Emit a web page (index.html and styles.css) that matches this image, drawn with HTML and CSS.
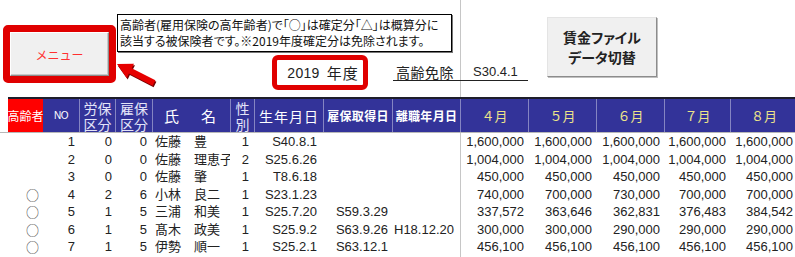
FILE: index.html
```html
<!DOCTYPE html>
<html lang="ja">
<head>
<meta charset="utf-8">
<link rel="stylesheet" href="styles.css">
</head>
<body>
<div class="sheet">
  <div class="top">
    <div class="menu-frame"><button class="menu-btn">メニュー</button></div>
    <div class="mid">
      <div class="note">高齢者(雇用保険の高年齢者)で「○」は確定分「△」は概算分に<br>該当する被保険者です。※2019年度確定分は免除されます。</div>
      <div class="mid-row">
        <svg class="arrow" width="44" height="31" viewBox="0 0 44 31">
          <polygon points="3,9 20,8.3 17.7,12.7 41.4,24.8 38.6,30.2 14.9,18.1 12.7,22.5" fill="#7a0000"/>
          <polygon points="2,7 19,6.8 16.7,11.2 40.4,23.3 37.6,28.7 13.9,16.6 11.7,21" fill="#e60000"/>
        </svg>
        <div class="year-box"><span class="yr-num">2019</span><span class="yr-label">年度</span></div>
        <div class="exempt"><span class="ex-label">高齢免除</span><span class="ex-date">S30.4.1</span></div>
      </div>
    </div>
    <button class="wage-btn">賃金ファイル<br>データ切替</button>
  </div>

  <div class="hdr">
    <div class="hc h-old">高齢者</div>
    <div class="hc h-no">NO</div>
    <div class="hc h-two"><span>労保</span><span>区分</span></div>
    <div class="hc h-two"><span>雇保</span><span>区分</span></div>
    <div class="hc h-name"><span>氏</span><span>名</span></div>
    <div class="hc h-two"><span>性</span><span>別</span></div>
    <div class="hc h-birth">生年月日</div>
    <div class="hc h-small">雇保取得日</div>
    <div class="hc h-small">離職年月日</div>
    <div class="hc h-month">４月</div>
    <div class="hc h-month">５月</div>
    <div class="hc h-month">６月</div>
    <div class="hc h-month">７月</div>
    <div class="hc h-month">８月</div>
  </div>

  <div class="rows">
    <div class="row">
      <div class="c c-old"></div><div class="c c-no">1</div><div class="c c-k1">0</div><div class="c c-k2">0</div><div class="c c-name">佐藤　豊</div><div class="c c-sex">1</div><div class="c c-birth">S40.8.1</div><div class="c c-get"></div><div class="c c-left"></div><div class="c c-m">1,600,000</div><div class="c c-m">1,600,000</div><div class="c c-m">1,600,000</div><div class="c c-m">1,600,000</div><div class="c c-m">1,600,000</div>
    </div>
    <div class="row">
      <div class="c c-old"></div><div class="c c-no">2</div><div class="c c-k1">0</div><div class="c c-k2">0</div><div class="c c-name">佐藤　理恵子</div><div class="c c-sex">2</div><div class="c c-birth">S25.6.26</div><div class="c c-get"></div><div class="c c-left"></div><div class="c c-m">1,004,000</div><div class="c c-m">1,004,000</div><div class="c c-m">1,004,000</div><div class="c c-m">1,004,000</div><div class="c c-m">1,004,000</div>
    </div>
    <div class="row">
      <div class="c c-old"></div><div class="c c-no">3</div><div class="c c-k1">0</div><div class="c c-k2">0</div><div class="c c-name">佐藤　肇</div><div class="c c-sex">1</div><div class="c c-birth">T8.6.18</div><div class="c c-get"></div><div class="c c-left"></div><div class="c c-m">450,000</div><div class="c c-m">450,000</div><div class="c c-m">450,000</div><div class="c c-m">450,000</div><div class="c c-m">450,000</div>
    </div>
    <div class="row">
      <div class="c c-old">○</div><div class="c c-no">4</div><div class="c c-k1">2</div><div class="c c-k2">6</div><div class="c c-name">小林　良二</div><div class="c c-sex">1</div><div class="c c-birth">S23.1.23</div><div class="c c-get"></div><div class="c c-left"></div><div class="c c-m">740,000</div><div class="c c-m">700,000</div><div class="c c-m">730,000</div><div class="c c-m">700,000</div><div class="c c-m">700,000</div>
    </div>
    <div class="row">
      <div class="c c-old">○</div><div class="c c-no">5</div><div class="c c-k1">1</div><div class="c c-k2">5</div><div class="c c-name">三浦　和美</div><div class="c c-sex">1</div><div class="c c-birth">S25.7.20</div><div class="c c-get">S59.3.29</div><div class="c c-left"></div><div class="c c-m">337,572</div><div class="c c-m">363,646</div><div class="c c-m">362,831</div><div class="c c-m">376,483</div><div class="c c-m">384,542</div>
    </div>
    <div class="row">
      <div class="c c-old">○</div><div class="c c-no">6</div><div class="c c-k1">1</div><div class="c c-k2">5</div><div class="c c-name">髙木　政美</div><div class="c c-sex">1</div><div class="c c-birth">S25.9.2</div><div class="c c-get">S63.9.26</div><div class="c c-left">H18.12.20</div><div class="c c-m">300,000</div><div class="c c-m">300,000</div><div class="c c-m">290,000</div><div class="c c-m">290,000</div><div class="c c-m">290,000</div>
    </div>
    <div class="row">
      <div class="c c-old">○</div><div class="c c-no">7</div><div class="c c-k1">1</div><div class="c c-k2">5</div><div class="c c-name">伊勢　順一</div><div class="c c-sex">1</div><div class="c c-birth">S25.2.1</div><div class="c c-get">S63.12.1</div><div class="c c-left"></div><div class="c c-m">456,100</div><div class="c c-m">456,100</div><div class="c c-m">456,100</div><div class="c c-m">456,100</div><div class="c c-m">456,100</div>
    </div>
  </div>
</div>
</body>
</html>
```
FILE: styles.css
```css
* { box-sizing: border-box; }
html, body { margin: 0; padding: 0; background: #fff; }
body {
  font-family: "Liberation Sans", "Noto Sans CJK JP", sans-serif;
  color: #222;
}
.sheet {
  position: relative;
  width: 795px;
  height: 257px;
  overflow: hidden;
}
.sheet::before {
  content: "";
  position: absolute;
  left: 460px;
  top: 0;
  bottom: 0;
  width: 1px;
  background: #c6c6c6;
  z-index: 0;
}

/* top area */
.top {
  position: relative;
  z-index: 1;
  display: flex;
  align-items: flex-start;
  height: 97px;
}
.menu-frame {
  margin: 25px 0 0 3px;
  width: 113px;
  height: 58px;
  border: 7px solid #e00000;
  border-radius: 5px;
  flex: none;
}
.menu-btn {
  display: block;
  width: 100%;
  height: 100%;
  margin: 0;
  padding: 0;
  background: #f0f0f0;
  border: 1px solid;
  border-color: #ffffff #8c8c8c #8c8c8c #ffffff;
  box-shadow: inset -1px -1px 0 #c8c8c8;
  font-family: "Noto Sans CJK JP", sans-serif;
  font-size: 12px;
  color: #ff3030;
}
.mid {
  display: flex;
  flex-direction: column;
  margin-left: 1px;
  width: 411px;
  flex: none;
}
.note {
  margin-top: 14px;
  width: 335px;
  height: 38px;
  border: 1px solid #000;
  box-shadow: 1px 1px 0 #777;
  background: #fff;
  padding: 2px 2px 0 2px;
  font-family: "Noto Sans CJK JP", sans-serif;
  font-feature-settings: "palt";
  font-size: 12px;
  line-height: 16px;
  white-space: nowrap;
  color: #111;
}
.mid-row {
  display: flex;
  align-items: flex-start;
}
.arrow {
  display: block;
  flex: none;
  margin: 5px 0 0 -2px;
}
.year-box {
  flex: none;
  margin: 3px 0 0 113px;
  width: 96px;
  height: 35px;
  border: 5px solid #e00000;
  border-radius: 6px;
  background: #fff;
  display: flex;
  align-items: center;
  justify-content: center;
  gap: 7px;
  padding-left: 6px;
  color: #222;
}
.yr-num {
  font-family: "Liberation Sans", sans-serif;
  font-size: 14px;
  letter-spacing: 0.3px;
}
.yr-label {
  font-family: "Noto Sans CJK JP", sans-serif;
  font-size: 15px;
  letter-spacing: 1px;
}
.exempt {
  flex: none;
  margin: 12px 0 0 25px;
  width: 135px;
  height: 17px;
  border-bottom: 1px solid #222;
  display: flex;
  align-items: center;
  padding-left: 3px;
  font-size: 14px;
  line-height: 16px;
}
.ex-label {
  font-family: "Noto Sans CJK JP", sans-serif;
  letter-spacing: 0.5px;
}
.ex-date {
  margin-left: 19px;
  font-size: 13px;
}
.wage-btn {
  flex: none;
  margin: 17px 0 0 19px;
  width: 110px;
  height: 60px;
  padding: 0;
  background: #f0f0f0;
  border: 1px solid;
  border-color: #e4e4e4 #8c8c8c #8c8c8c #e4e4e4;
  box-shadow: 1px 1px 0 #c0c0c0;
  font-family: "Noto Sans CJK JP", sans-serif;
  font-feature-settings: "palt";
  font-weight: bold;
  font-size: 14px;
  line-height: 20px;
  color: #222;
}

/* header */
.hdr, .row {
  display: grid;
  grid-template-columns: 35px 36px 36px 37px 78px 24px 69px 69px 68px 68px 68px 68px 66px 67px;
}
.hdr {
  position: relative;
  z-index: 1;
  margin-left: 8px;
  border-top: 2px solid #1e1e2a;
  height: 35px;
}
.hc {
  background: #333399;
  color: #fff;
  border-left: 1px solid #8585c2;
  display: flex;
  align-items: center;
  justify-content: center;
  text-align: center;
  font-family: "Noto Sans CJK JP", sans-serif;
  white-space: nowrap;
}
.h-old {
  background: #ff0000;
  border-left: none;
  font-size: 12px;
}
.h-no {
  font-family: "Liberation Sans", sans-serif;
  font-size: 10px;
  letter-spacing: -0.5px;
  border-left: none;
}
.h-two {
  flex-direction: column;
  font-size: 14px;
  color: #e4e4f8;
}
.h-two span {
  display: block;
  height: 16px;
  line-height: 16px;
}
.h-name {
  justify-content: space-between;
  padding: 0 14px 0 11px;
  font-size: 15px;
}
.h-birth {
  font-size: 14px;
  letter-spacing: 1px;
}
.h-small {
  font-size: 12px;
  font-weight: bold;
  letter-spacing: 0.3px;
}
.h-month {
  font-size: 13px;
  color: #ece48a;
  letter-spacing: 0;
}

/* body rows */
.rows {
  position: relative;
  z-index: 0;
  border-top: 1px solid #b8b8b8;
  padding: 0 0 0 8px;
}
.row {
  height: 17.5px;
  font-size: 13px;
  line-height: 17.5px;
  color: #222;
}
.c {
  overflow: hidden;
  white-space: nowrap;
  text-align: right;
}
.c-old { padding-right: 4px; font-family: "Noto Sans CJK JP", sans-serif; color: #444; }
.c-no { padding-right: 4px; }
.c-k1 { padding-right: 3px; }
.c-k2 { padding-right: 5px; }
.c-name { text-align: left; padding-left: 3px; }
.c-sex { padding-right: 5px; }
.c-birth { padding-right: 6px; }
.c-get { padding-right: 4px; }
.c-left { padding-right: 6px; }
.c-m { padding-right: 4px; }
```
